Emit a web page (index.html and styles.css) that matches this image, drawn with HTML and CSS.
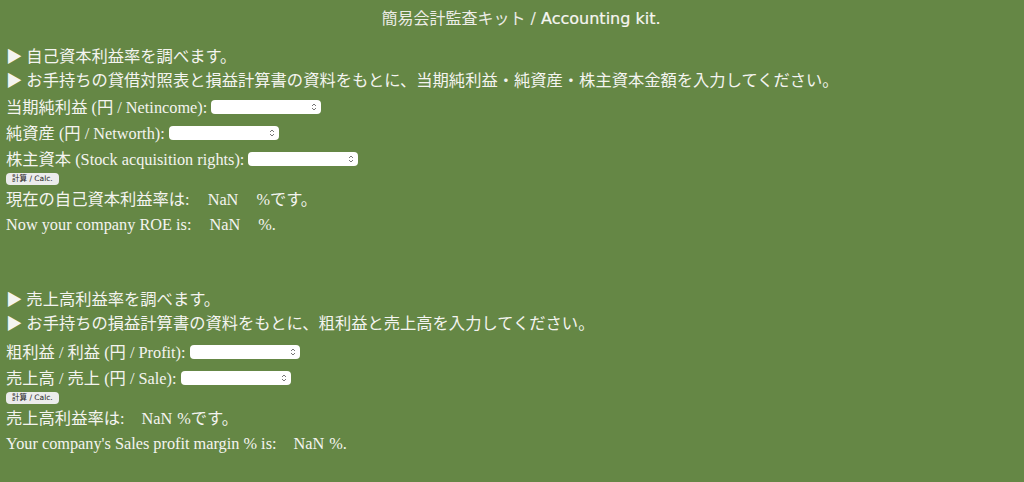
FILE: index.html
```html
<!DOCTYPE html>
<html lang="ja">
<head>
<meta charset="utf-8">
<title>簡易会計監査キット</title>
<link rel="stylesheet" href="styles.css">
</head>
<body>
<header class="title">簡易会計監査キット / <span class="en">Accounting kit.</span></header>

<section class="block">
  <div class="line">▶ 自己資本利益率を調べます。</div>
  <div class="line">▶ お手持ちの貸借対照表と損益計算書の資料をもとに、当期純利益・純資産・株主資本金額を入力してください。</div>
  <div class="field"><span>当期純利益 (円 / Netincome):</span><span class="num"><input type="number"><svg class="spin" viewBox="0 0 6 10"><path d="M1 4 L3 2 L5 4 M1 6 L3 8 L5 6" fill="none" stroke="#777" stroke-width="1"/></svg></span></div>
  <div class="field"><span>純資産 (円 / Networth):</span><span class="num"><input type="number"><svg class="spin" viewBox="0 0 6 10"><path d="M1 4 L3 2 L5 4 M1 6 L3 8 L5 6" fill="none" stroke="#777" stroke-width="1"/></svg></span></div>
  <div class="field"><span>株主資本 (Stock acquisition rights):</span><span class="num"><input type="number"><svg class="spin" viewBox="0 0 6 10"><path d="M1 4 L3 2 L5 4 M1 6 L3 8 L5 6" fill="none" stroke="#777" stroke-width="1"/></svg></span></div>
  <div class="btnrow"><button class="calc">計算 / Calc.</button></div>
  <div class="result">現在の自己資本利益率は:<span class="val wide">NaN</span>%です。</div>
  <div class="result">Now your company ROE is:<span class="val wide">NaN</span>%.</div>
</section>

<section class="block second">
  <div class="line">▶ 売上高利益率を調べます。</div>
  <div class="line">▶ お手持ちの損益計算書の資料をもとに、粗利益と売上高を入力してください。</div>
  <div class="field"><span>粗利益 / 利益 (円 / Profit):</span><span class="num"><input type="number"><svg class="spin" viewBox="0 0 6 10"><path d="M1 4 L3 2 L5 4 M1 6 L3 8 L5 6" fill="none" stroke="#777" stroke-width="1"/></svg></span></div>
  <div class="field"><span>売上高 / 売上 (円 / Sale):</span><span class="num"><input type="number"><svg class="spin" viewBox="0 0 6 10"><path d="M1 4 L3 2 L5 4 M1 6 L3 8 L5 6" fill="none" stroke="#777" stroke-width="1"/></svg></span></div>
  <div class="btnrow"><button class="calc">計算 / Calc.</button></div>
  <div class="result">売上高利益率は:<span class="val narrow">NaN</span>%です。</div>
  <div class="result">Your company's Sales profit margin % is:<span class="val narrow">NaN</span>%.</div>
</section>
</body>
</html>
```
FILE: styles.css
```css
html, body {
  margin: 0;
  padding: 0;
  background: #658745;
}
body {
  color: #f4f4f0;
  font-family: "Liberation Serif", "Noto Sans CJK JP", serif;
  font-size: 16.3px;
  padding: 0 6px;
}
.title {
  font-family: "DejaVu Sans", "Noto Sans CJK JP", sans-serif;
  font-size: 16px;
  text-align: center;
  line-height: 20px;
  padding-top: 9px;
  padding-left: 18px;
  color: #ecece6;
}
.title .en {
  color: #f6f6f2;
  -webkit-text-stroke: 0.2px #f6f6f2;
}
.block {
  padding-top: 16px;
}
.second {
  padding-top: 51px;
}
.line {
  line-height: 24px;
}
.field {
  display: flex;
  align-items: center;
  gap: 4px;
  height: 26px;
}
.second .line + .field {
  margin-top: 2px;
}
.num {
  position: relative;
  display: inline-flex;
  align-items: center;
}
.num input {
  width: 110px;
  height: 14px;
  box-sizing: border-box;
  border: none;
  border-radius: 4px;
  background: #fff;
  padding: 0 4px;
  margin-top: 2px;
  font-size: 10px;
  -moz-appearance: textfield;
}
.num input::-webkit-inner-spin-button,
.num input::-webkit-outer-spin-button {
  -webkit-appearance: none;
  margin: 0;
}
.spin {
  position: absolute;
  right: 4px;
  top: 4px;
  width: 6px;
  height: 10px;
}
.btnrow {
  height: 14px;
  display: flex;
  align-items: center;
}
.calc {
  font-family: "DejaVu Sans", "Noto Sans CJK JP", sans-serif;
  font-size: 7.5px;
  height: 12px;
  line-height: 12px;
  padding: 0 6px;
  border: none;
  border-radius: 4px;
  background: #ececec;
  color: #222;
  margin-top: 2px;
}
.result {
  line-height: 25px;
}
.btnrow + .result {
  margin-top: 2px;
}
.val.wide {
  margin: 0 18px 0 18px;
}
.val.narrow {
  margin: 0 5px 0 17px;
}
```
